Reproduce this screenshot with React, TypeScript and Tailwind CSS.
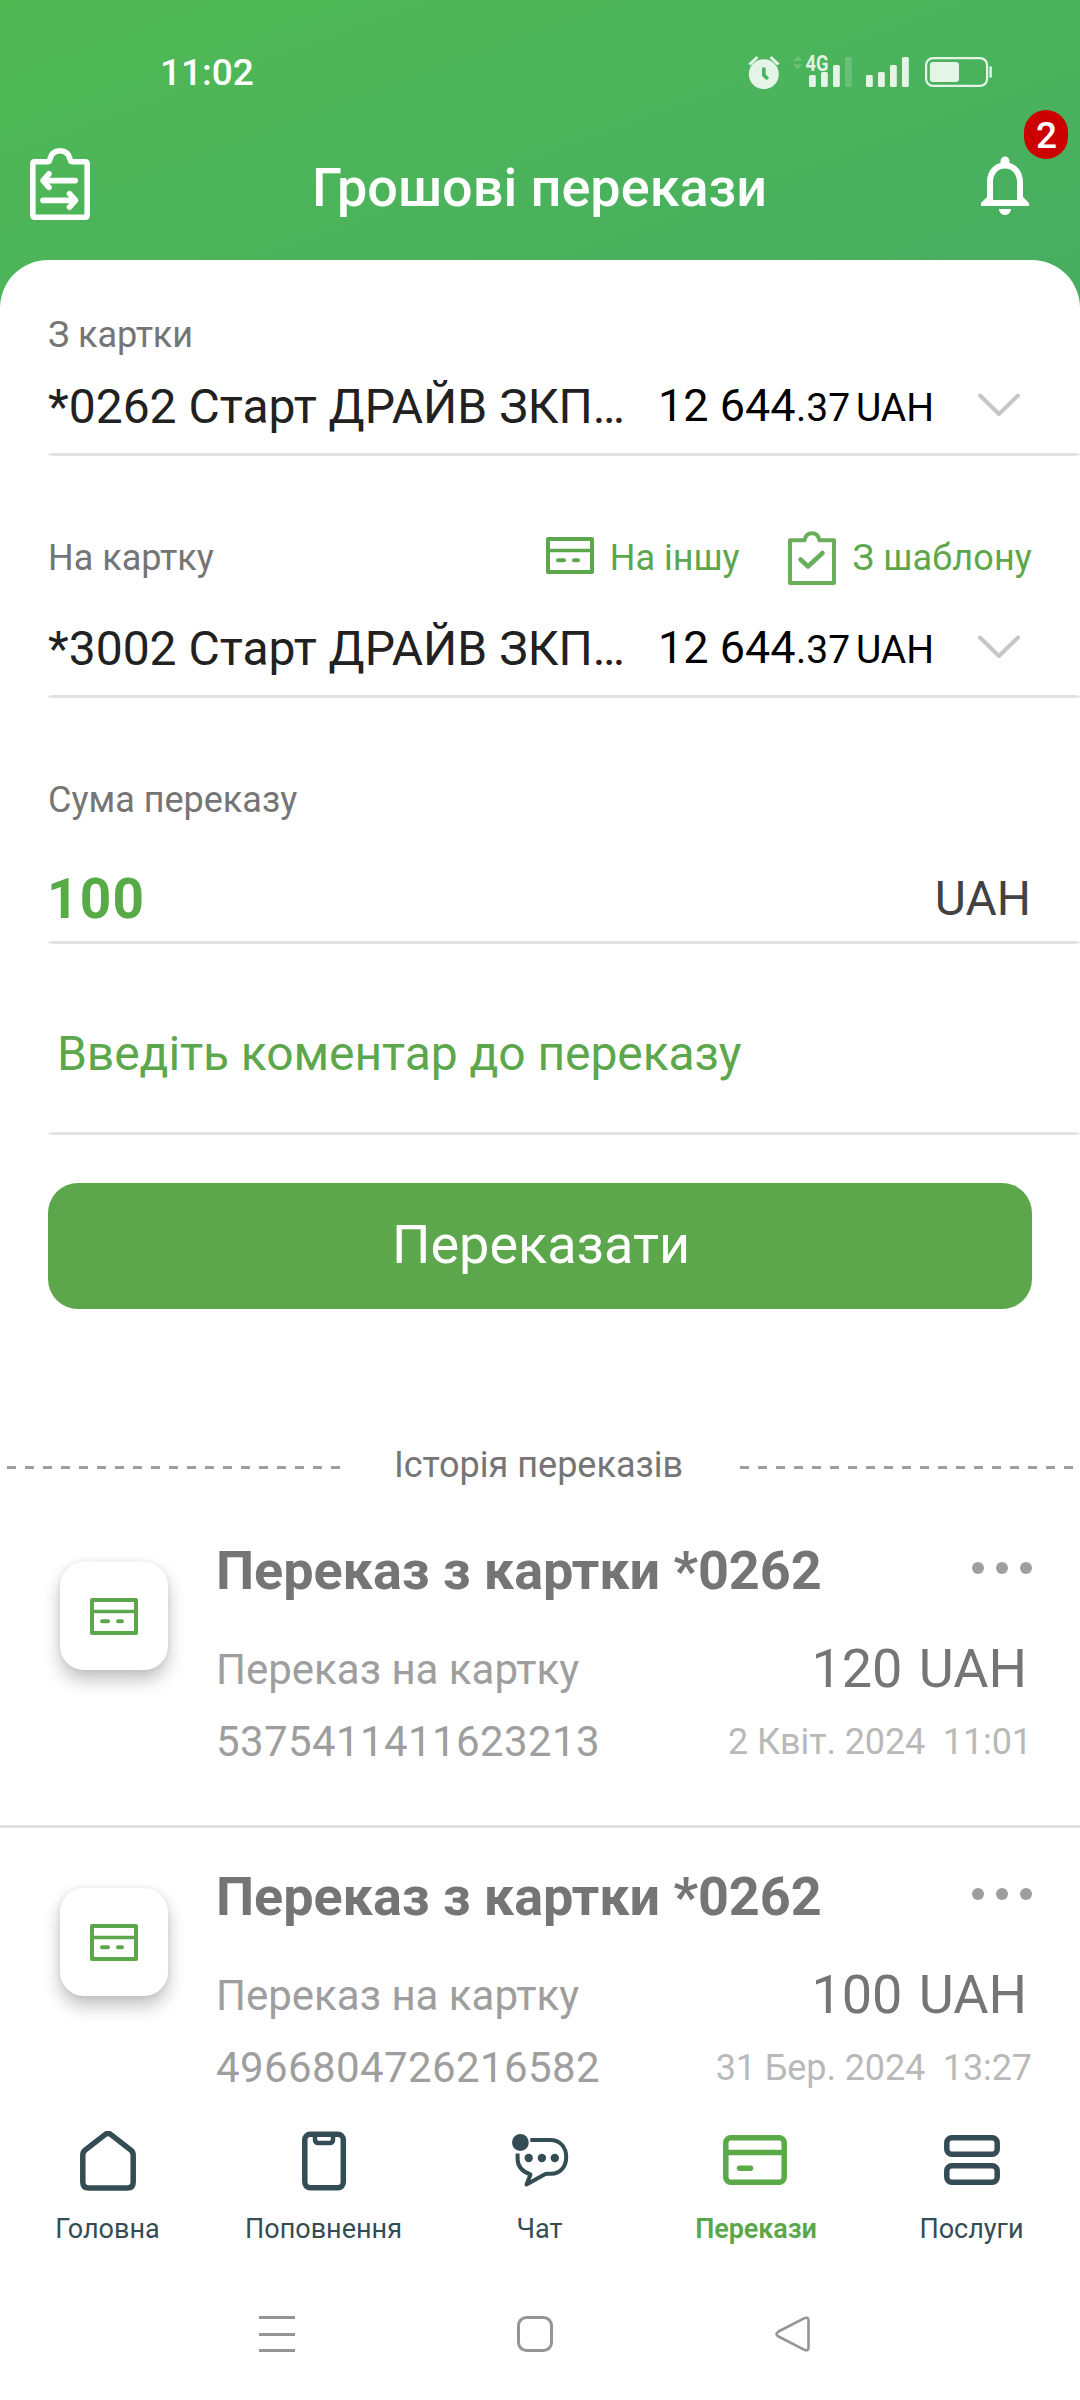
import React from "react";

interface Transfer {
  title: string;
  target: string;
  number: string;
  amount: string;
  date: string;
}

const transfers: Transfer[] = [
  {
    title: "Переказ з картки *0262",
    target: "Переказ на картку",
    number: "5375411411623213",
    amount: "120 UAH",
    date: "2 Квіт. 2024  11:01",
  },
  {
    title: "Переказ з картки *0262",
    target: "Переказ на картку",
    number: "4966804726216582",
    amount: "100 UAH",
    date: "31 Бер. 2024  13:27",
  },
];

const StatusIcons = () => (
  <svg width="248" height="40" viewBox="746 52 248 40" fill="#fff" fillOpacity="0.85">
    <circle cx="763.8" cy="74.2" r="15" />
    <path d="M763.8 67.500v7.500l4 4" fill="none" stroke="#4ab35c" strokeWidth="3.600" />
    <path d="M749.500 64.500l8-7.500M778.500 64.500l-8-7.500" fill="none" stroke="#fff" strokeOpacity="0.85" strokeWidth="3" />
    <path d="M793 61l4.700-5.500L802.400 61zM793 64.300l4.700 5.500 4.700-5.500z" fillOpacity="0.18" />
    <text x="805.500" y="70.500" textLength="23" lengthAdjust="spacingAndGlyphs" fontFamily="Roboto" fontWeight="700" fontSize="22">4G</text>
    <rect x="809" y="75" width="6.800" height="12" rx="1.500" />
    <rect x="821" y="72" width="6.800" height="15" rx="1.500" />
    <rect x="833" y="65" width="6.800" height="22" rx="1.500" />
    <rect x="845" y="57" width="6.800" height="30" rx="1.500" fillOpacity="0.18" />
    <rect x="866" y="75" width="6.800" height="12" rx="1.500" />
    <rect x="878" y="72" width="6.800" height="15" rx="1.500" />
    <rect x="890" y="65" width="6.800" height="22" rx="1.500" />
    <rect x="902" y="57" width="6.800" height="30" rx="1.500" />
    <rect x="926.100" y="58.100" width="61" height="27.800" rx="7" fill="none" stroke="#fff" strokeOpacity="0.85" strokeWidth="2.200" />
    <rect x="929.800" y="62" width="29.200" height="20" rx="3" />
    <rect x="989.400" y="66.300" width="2.400" height="11.400" rx="1" />
  </svg>
);

const TemplatesIcon = () => (
  <svg width="60" height="72" viewBox="0 0 60 72" fill="none" stroke="#fff" strokeWidth="5.600" strokeLinecap="round" strokeLinejoin="round">
    <path d="M5 13.800h12.500q1.800 0 2.200-2C21 6 24.500 2.800 30 2.800S39 6 40.300 11.800q.4 2 2.200 2H55q2.200 0 2.200 2.200v51q0 2.200-2.200 2.200H5q-2.200 0-2.200-2.200V16q0-2.200 2.200-2.200z" />
    <path d="M45.300 32.600H13.200M19 25.800l-6 6.800 6 6.800" />
    <path d="M13 52.400h32M39.500 45.600l6 6.800-6 6.800" />
  </svg>
);

const BellIcon = () => (
  <svg className="mt-px" width="72" height="72" viewBox="0 0 24 24" fill="#fff">
    <path d="M12 22c1.100 0 2-.9 2-2h-4c0 1.100.9 2 2 2zm6-6v-5c0-3.070-1.630-5.640-4.500-6.320V4c0-.83-.67-1.500-1.500-1.500s-1.500.67-1.500 1.500v.68C7.640 5.360 6 7.920 6 11v5l-2 2v1h16v-1l-2-2zm-2 1H8v-6c0-2.480 1.510-4.500 4-4.500s4 2.020 4 4.500v6z" />
  </svg>
);

const CardIcon = () => (
  <svg width="48" height="37" viewBox="0 0 48 37" fill="none" stroke="#5ca74c" strokeWidth="4" strokeLinejoin="round">
    <rect x="2" y="2" width="44" height="33" />
    <path d="M2 13.500h44" strokeWidth="3.600" />
    <path d="M12 23.300h6M28 23.300h4" strokeLinecap="round" />
  </svg>
);

const ClipboardCheckIcon = () => (
  <svg width="48" height="54" viewBox="0 0 48 54" fill="none" stroke="#6aae5b" strokeWidth="4" strokeLinejoin="round">
    <path d="M2 9.200h14.500C17.500 4.800 20 2.300 24 2.300s6.500 2.500 7.500 6.900H46V52H2z" />
    <path d="M12.500 28.500l7.500 7L34.500 22" strokeLinecap="round" strokeWidth="4.500" />
  </svg>
);

const HomeIcon = () => (
  <svg width="56" height="60" viewBox="0 0 56 60" fill="none" stroke="#344d54" strokeWidth="5.500" strokeLinejoin="round">
    <path d="M2.800 24q0-3 2.300-4.900L25 3.600q3-2.200 6 0l19.900 15.500q2.300 1.900 2.300 4.900v27q0 6-6 6H8.800q-6 0-6-6z" />
  </svg>
);

const PhoneIcon = () => (
  <svg width="46" height="60" viewBox="0 0 46 60" fill="none" stroke="#344d54" strokeWidth="5.500">
    <rect x="3.800" y="3.300" width="38.500" height="53.500" rx="5.500" />
    <path d="M14 4.500v4q0 3.500 3.500 3.500h11q3.500 0 3.500-3.500v-4" strokeWidth="4.500" />
  </svg>
);

const ChatIcon = () => (
  <svg width="57" height="54" viewBox="0 0 57 54" fill="none" stroke="#344d54" strokeWidth="4" strokeLinejoin="round">
    <circle cx="8.400" cy="8.500" r="8.400" fill="#344d54" stroke="none" />
    <path d="M18.300 6H38C48 6 54.200 13 54.200 23S48 39.800 39 39.800h-3.500q-1.800 0-3.500.9L14.500 50.500l4-10C10 37.500 5.600 32 5.600 25v-5.500" />
    <g fill="#344d54" stroke="none">
      <circle cx="16.700" cy="24" r="4.200" />
      <circle cx="29.900" cy="24" r="4.200" />
      <circle cx="42.800" cy="24" r="4.200" />
    </g>
  </svg>
);

const TransfersIcon = () => (
  <svg className="mb-[2px] mr-[3px]" width="64" height="50" viewBox="0 0 64 50" fill="none" stroke="#5aaa48" strokeWidth="5.500">
    <rect x="2.800" y="2.800" width="58.400" height="44.400" rx="5" />
    <path d="M3 17.600h58" />
    <path d="M16.500 33.300h11" strokeLinecap="round" />
  </svg>
);

const ServicesIcon = () => (
  <svg className="mb-[2px]" width="56" height="50" viewBox="0 0 56 50" fill="none" stroke="#344d54" strokeWidth="5.500">
    <rect x="2.800" y="2.800" width="50.400" height="16.400" rx="5" />
    <rect x="2.800" y="30.800" width="50.400" height="16.400" rx="5" />
  </svg>
);

const Divider = () => <div className="ml-12 h-[3px] rounded-[6px/1.5px] bg-[#e2e2e2]" />;

const AccountRow = ({ name }: { name: string }) => (
  <div className="flex h-[72px] pl-12">
    <div className="mt-[4px] flex h-[66px] items-baseline whitespace-nowrap">
      <span className="w-[610px] text-[48px] leading-[64px] text-[#212121]">{name}</span>
      <span className="relative top-[-2px] w-[138px] text-[45px] text-black">12 644</span>
      <span className="relative top-[-2px] w-[60px] text-[39px] text-black">.37</span>
      <span className="relative top-[-2px] w-[120px] text-[39px] text-black">UAH</span>
    </div>
    <svg className="mt-[22px]" width="46" height="26" viewBox="0 0 46 26" fill="none" stroke="#c6c6c6" strokeWidth="4" strokeLinecap="round" strokeLinejoin="round">
      <path d="M4 3.500l19 18.500L42 3.500" />
    </svg>
  </div>
);

const HistoryItem = ({ item }: { item: Transfer }) => (
  <div className="flex h-[326px] border-b-[3px] border-[#e0e0e0] pl-[60px] pr-12">
    <div className="mt-[60px] flex h-[108px] w-[108px] shrink-0 items-center justify-center rounded-[24px] bg-white shadow-[0_10px_18px_rgba(0,0,0,0.24),0_0_6px_rgba(0,0,0,0.08)]">
      <CardIcon />
    </div>
    <div className="ml-12 flex-1 text-[#757575]">
      <div className="mt-[37px] flex h-[64px] justify-between">
        <span className="text-[54px] font-bold leading-[64px] tracking-[-0.07px]">{item.title}</span>
        <div className="mt-[23px] flex gap-3">
          <i className="h-3 w-3 rounded-full bg-[#9e9e9e]" />
          <i className="h-3 w-3 rounded-full bg-[#9e9e9e]" />
          <i className="h-3 w-3 rounded-full bg-[#9e9e9e]" />
        </div>
      </div>
      <div className="mt-[34px] flex h-[64px] justify-between">
        <span className="mt-px text-[42px] leading-[64px] text-[#9e9e9e]">{item.target}</span>
        <span className="mr-[5px] text-[54px] leading-[64px] [word-spacing:3px]">{item.amount}</span>
      </div>
      <div className="mt-[10px] flex h-[60px] justify-between">
        <span className="text-[42px] leading-[62px] tracking-[0.4px] text-[#9e9e9e]">{item.number}</span>
        <span className="whitespace-pre text-[36px] leading-[62px] tracking-[-0.1px] text-[#b9b9b9]">{item.date}</span>
      </div>
    </div>
  </div>
);

interface NavItemProps {
  icon: React.ReactNode;
  label: string;
  active?: boolean;
}

const NavItem = ({ icon, label, active }: NavItemProps) => (
  <div className="flex w-[216px] flex-col items-center">
    <div className="flex h-[60px] items-center justify-center">{icon}</div>
    <span className={active ? "mt-[20px] text-[27px] font-semibold leading-[36px] tracking-[-0.1px] text-[#5aa74b]" : "mr-px mt-[20px] text-[27px] leading-[36px] text-[#344d54]"}>
      {label}
    </span>
  </div>
);

const Dashes = () => (
  <svg width="333" height="3" viewBox="0 0 333 3">
    <path d="M0 1.500h333" stroke="#9e9e9e" strokeWidth="3" strokeDasharray="9 9" />
  </svg>
);

export default function App() {
  return (
    <div className="flex h-[2400px] w-[1080px] flex-col overflow-hidden bg-[linear-gradient(160deg,#50b954_0px,#46ad62_680px)] font-['Roboto',sans-serif]">
      <header className="h-[260px] shrink-0 text-white">
        <div className="flex h-[120px] justify-between pl-[160px] pr-[86px] pt-[52px]">
          <span className="text-[37px] font-medium leading-[42px]">11:02</span>
          <StatusIcons />
        </div>
        <div className="relative flex h-[140px] items-start justify-between pl-[30px] pr-[39px] pt-[28px]">
          <TemplatesIcon />
          <h1 className="mt-[8px] pl-[20px] text-[54px] font-medium leading-[64px]">Грошові перекази</h1>
          <BellIcon />
          <span className="absolute right-[12px] top-[-10px] flex h-[49px] w-[44px] items-center justify-center rounded-[22px] bg-[#cc0000] pl-px pt-[3px] text-[37px] font-medium">
            2
          </span>
        </div>
      </header>

      <main className="h-[1850px] shrink-0 overflow-hidden rounded-t-[48px] bg-white">
        <div className="h-[193px] pt-[54px]">
          <div className="h-[56px] pl-12 text-[36px] leading-[42px] tracking-[-0.1px] text-[#757575]">З картки</div>
          <AccountRow name="*0262 Старт ДРАЙВ ЗКП…" />
        </div>
        <Divider />

        <div className="h-[239px] pt-[73px]">
          <div className="flex h-[83px] items-start pl-12 pr-12 text-[36px] leading-[42px]">
            <span className="mt-[8px] flex-1 text-[#757575]">На картку</span>
            <div className="mt-[8px] text-[#5ca74c]">
              <CardIcon />
            </div>
            <span className="ml-[16px] mt-[8px] text-[#5ca74c]">На іншу</span>
            <div className="ml-[48px] mt-[2px]">
              <ClipboardCheckIcon />
            </div>
            <span className="ml-[17px] mt-[8px] tracking-[0.15px] text-[#5ca74c]">З шаблону</span>
          </div>
          <AccountRow name="*3002 Старт ДРАЙВ ЗКП…" />
        </div>
        <Divider />

        <div className="h-[243px] pl-12 pr-12 pt-[81px]">
          <div className="text-[36px] leading-[42px] text-[#757575]">Сума переказу</div>
          <div className="mt-[46px] flex justify-between">
            <span className="ml-[-1px] text-[55px] font-bold leading-[64px] tracking-[1.2px] text-[#57ab46]">100</span>
            <span className="mr-px text-[48px] leading-[64px] text-[#424242]">UAH</span>
          </div>
        </div>
        <Divider />

        <div className="h-[188px] pl-[57px] pt-[79px] text-[48px] leading-[62px] tracking-[-0.08px] text-[#5ca74c]">Введіть коментар до переказу</div>
        <Divider />

        <button className="ml-12 mt-12 block h-[126px] w-[984px] rounded-[30px] bg-[#5ca74c] pb-[3px] pl-[2px] text-[54px] text-white">Переказати</button>

        <div className="mt-[131px] flex h-[62px] items-center justify-between px-[7px] pb-[8px]">
          <Dashes />
          <span className="mb-[4px] mr-[3px] text-[36px] leading-[42px] text-[#757575]">Історія переказів</span>
          <Dashes />
        </div>

        {transfers.map((item) => (
          <HistoryItem key={item.number} item={item} />
        ))}
      </main>

      <nav className="flex h-[170px] shrink-0 bg-white pt-[21px]">
        <NavItem icon={<HomeIcon />} label="Головна" />
        <NavItem icon={<PhoneIcon />} label="Поповнення" />
        <NavItem icon={<ChatIcon />} label="Чат" />
        <NavItem icon={<TransfersIcon />} label="Перекази" active />
        <NavItem icon={<ServicesIcon />} label="Послуги" />
      </nav>

      <div className="flex h-[120px] shrink-0 bg-white pl-[259px] pt-[36px]">
        <svg width="552" height="36" viewBox="0 0 552 36" fill="none" stroke="#959595" strokeWidth="3" strokeLinejoin="round">
          <path d="M0 1.500h36M0 18.500h36M0 34.500h36" />
          <rect x="259.500" y="1.500" width="33" height="33" rx="8" />
          <path d="M545.500 2.200 519.500 15.500q-4 2.500 0 5L545.500 33.800q4 1.500 4-2V4.200q0-3.500-4-2z" strokeWidth="2.600" />
        </svg>
      </div>
    </div>
  );
}
